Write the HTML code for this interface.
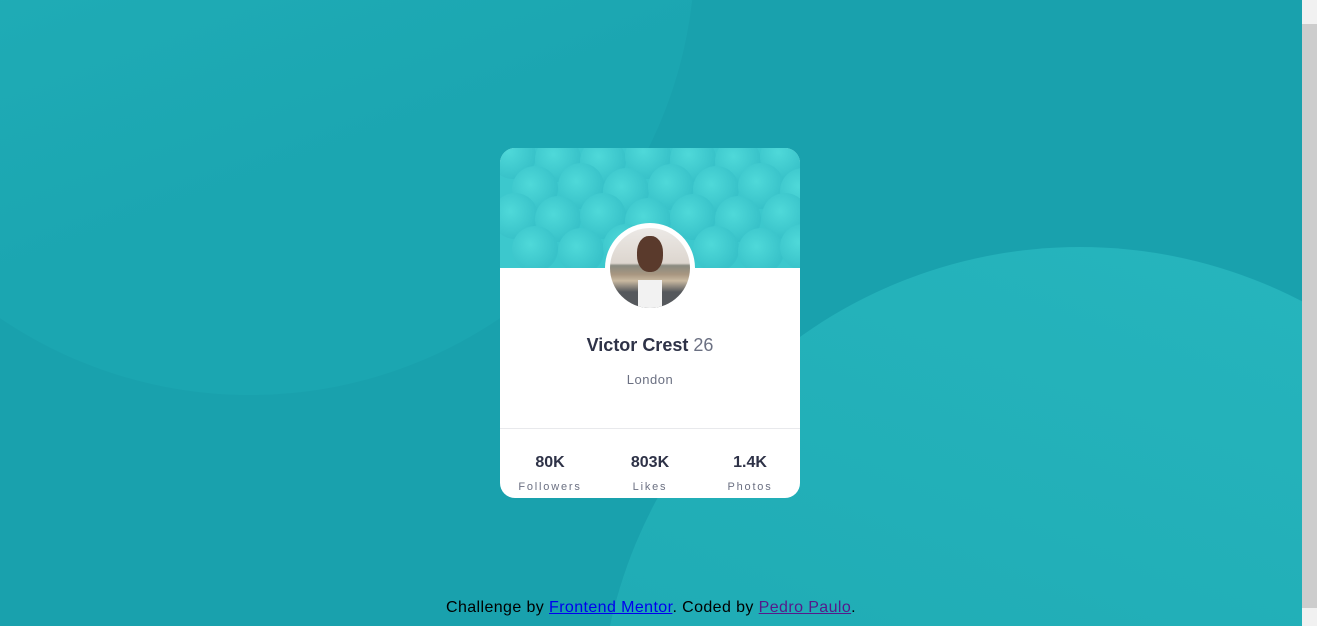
<!DOCTYPE html>
<html><head><meta charset="utf-8"><style>
*{margin:0;padding:0;box-sizing:border-box}
html,body{width:1317px;height:626px;overflow:hidden}
body{background:#19a1ad;font-family:"Liberation Sans",sans-serif;position:relative}
.c1{position:absolute;left:-195px;top:-495px;width:890px;height:890px;border-radius:50%;background:linear-gradient(160deg,#27b6be,#1ba6b1 70%)}
.c2{position:absolute;left:599px;top:247px;width:962px;height:962px;border-radius:50%;background:linear-gradient(200deg,#27b6be,#1fabb4 60%)}
.card{position:absolute;left:500px;top:148px;width:300px;height:350px;background:#fff;border-radius:15px;overflow:hidden}
.hd{height:120px;background:#3cc8cd;position:relative;overflow:hidden}
.hd i{position:absolute;width:46px;height:46px;border-radius:50%;background:radial-gradient(circle at 40% 40%,#4fd9d9,#38c2c9 70%)}
.av{position:absolute;left:105px;top:75px;width:90px;height:90px;border-radius:50%;background:#fff;padding:5px}
.av div{width:80px;height:80px;border-radius:50%;overflow:hidden;position:relative;background:linear-gradient(#ece9e6 0,#ddd6cf 44%,#8a8a80 47%,#a89680 58%,#c9b9a0 66%,#55585c 80%)}
.av div span{position:absolute;left:27px;top:8px;width:26px;height:36px;border-radius:45%;background:#5a3a2c}
.av div em{position:absolute;left:28px;top:52px;width:24px;height:30px;background:#f2f2f2}
.nm{position:absolute;top:187px;width:100%;text-align:center;font-size:18px;font-weight:bold;color:#2e3247}
.nm span{color:#6b7082;font-weight:normal}
.loc{position:absolute;top:224px;width:100%;text-align:center;font-size:13px;color:#6b7082;letter-spacing:.5px}
.ln{position:absolute;top:280px;width:100%;border-top:1px solid #e8e9ec}
.st{position:absolute;top:306px;width:100px;text-align:center}
.st b{display:block;font-size:16px;color:#2e3247}
.st small{display:block;margin-top:9px;font-size:11px;letter-spacing:1.8px;color:#6b7082}
.ft{position:absolute;top:599px;left:0;width:1302px;text-align:center;font-size:16px;letter-spacing:.4px;color:#000}
.ft a{color:#00e}.ft a.v{color:#551a8b}
.sb{position:absolute;left:1302px;top:0;width:15px;height:626px;background:#f1f1f1}
.th{position:absolute;left:1302px;top:24px;width:15px;height:584px;background:#cdcdcd}
</style></head><body>
<div class="c1"></div><div class="c2"></div>
<div class="card">
<div class="hd">
<i style="left:-10px;top:-15px"></i><i style="left:35px;top:-12px"></i><i style="left:80px;top:-10px"></i><i style="left:125px;top:-15px"></i><i style="left:170px;top:-12px"></i><i style="left:215px;top:-10px"></i><i style="left:260px;top:-14px"></i>
<i style="left:12px;top:18px"></i><i style="left:58px;top:15px"></i><i style="left:103px;top:20px"></i><i style="left:148px;top:16px"></i><i style="left:193px;top:18px"></i><i style="left:238px;top:15px"></i><i style="left:280px;top:20px"></i>
<i style="left:-8px;top:45px"></i><i style="left:35px;top:48px"></i><i style="left:80px;top:45px"></i><i style="left:125px;top:50px"></i><i style="left:170px;top:46px"></i><i style="left:215px;top:48px"></i><i style="left:262px;top:45px"></i>
<i style="left:12px;top:78px"></i><i style="left:58px;top:80px"></i><i style="left:103px;top:76px"></i><i style="left:193px;top:78px"></i><i style="left:238px;top:80px"></i><i style="left:280px;top:76px"></i>
</div>
<div class="av"><div><span></span><em></em></div></div>
<div class="nm">Victor Crest <span>26</span></div>
<div class="loc">London</div>
<div class="ln"></div>
<div class="st" style="left:0"><b>80K</b><small>Followers</small></div>
<div class="st" style="left:100px"><b>803K</b><small>Likes</small></div>
<div class="st" style="left:200px"><b>1.4K</b><small>Photos</small></div>
</div>
<div class="ft">Challenge by <a href="#">Frontend Mentor</a>. Coded by <a class="v" href="#">Pedro Paulo</a>.</div>
<div class="sb"></div><div class="th"></div>
</body></html>
